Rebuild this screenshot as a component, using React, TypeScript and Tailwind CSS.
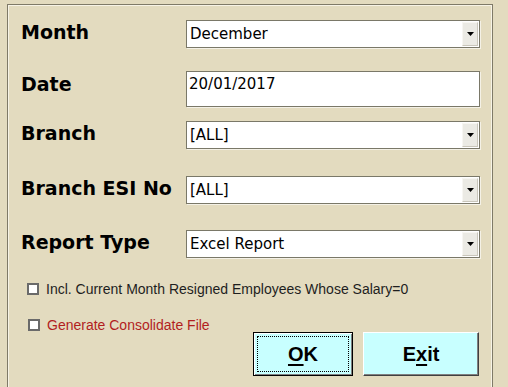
import type { ReactNode } from "react";

const labelFont = { fontFamily: '"DejaVu Sans", Verdana, sans-serif' };

const Arrow = () => (
    <svg width="7" height="4" viewBox="0 0 7 4">
        <polygon points="0,0 7,0 3.5,4" fill="#000" />
    </svg>
);

const Select = ({ value }: { value: string }) => (
    <div className="flex h-[28px] w-[294px] items-center border border-[#7a7868] bg-white shadow-[1px_1px_0_#f4f1e6]">
        <span className="flex-1 pl-[3px] text-[15px] leading-none text-black font-['DejaVu_Sans',sans-serif]">
            {value}
        </span>
        <div className="mr-[1px] flex h-[24px] w-[16px] items-center justify-center border border-t-[#f7f6f2] border-l-[#f7f6f2] border-b-[#c9c6bb] border-r-[#c9c6bb] bg-[#ebeae4]">
            <Arrow />
        </div>
    </div>
);

const Row = ({
    label,
    mt,
    pb,
    children,
}: {
    label: string;
    mt: string;
    pb: string;
    children: ReactNode;
}) => (
    <div className={`flex items-center ${mt}`}>
        <div
            className={`w-[165px] text-[19px] font-bold leading-none text-black ${pb}`}
            style={labelFont}
        >
            {label}
        </div>
        {children}
    </div>
);

const Check = ({ text, red }: { text: string; red?: boolean }) => (
    <div className="flex h-[12px] items-center gap-[7px]">
        <div className="h-[12px] w-[12px] border-2 border-[#6a6a6a] bg-white" />
        <span
            className={`text-[14px] leading-none font-['Liberation_Sans',Arial,sans-serif] ${
                red ? "text-[#b21e1e]" : "text-[#1e1e1e]"
            }`}
        >
            {text}
        </span>
    </div>
);

export default function App() {
    return (
        <div className="h-[387px] w-[508px] overflow-hidden bg-[#e3dbbf] pt-[4px] pl-[7px]">
            <div className="h-[420px] w-[486px] border border-[#7f7a68] bg-[#e3dbbf] pl-[13px] shadow-[inset_1px_1px_0_#f7f3e6,inset_-1px_0_0_#f7f3e6]">
                <Row label="Month" mt="mt-[15px]" pb="pb-[4px]">
                    <Select value="December" />
                </Row>
                <Row label="Date" mt="mt-[23px]" pb="pb-[9px]">
                    <div className="h-[36px] w-[294px] border border-[#7a7868] bg-white pt-[5px] pl-[2px] text-[15px] leading-none text-black shadow-[1px_1px_0_#f4f1e6] font-['DejaVu_Sans',sans-serif]">
                        20/01/2017
                    </div>
                </Row>
                <Row label="Branch" mt="mt-[14px]" pb="pb-[4px]">
                    <Select value="[ALL]" />
                </Row>
                <Row label="Branch ESI No" mt="mt-[27px]" pb="pb-[3px]">
                    <Select value="[ALL]" />
                </Row>
                <Row label="Report Type" mt="mt-[26px]" pb="pb-[4px]">
                    <Select value="Excel Report" />
                </Row>

                <div className="mt-[25px] pl-[6px]">
                    <Check text="Incl. Current Month Resigned Employees Whose Salary=0" />
                </div>
                <div className="mt-[24px] pl-[7px]">
                    <Check text="Generate Consolidate File" red />
                </div>

                <div className="mt-[1px] flex gap-[10px] pl-[232px] font-['Liberation_Sans',Arial,sans-serif]">
                    <button className="flex h-[44px] w-[100px] items-center justify-center border border-black bg-[#c8ffff] p-[3px] shadow-[inset_1px_1px_0_#ffffff,inset_-1px_-1px_0_#808080]">
                        <span className="flex h-full w-full items-center justify-center border border-dotted border-black text-[20px] font-bold text-black">
                            <span className="underline decoration-2 underline-offset-[3px]">O</span>K
                        </span>
                    </button>
                    <button className="flex h-[44px] w-[116px] items-center justify-center border border-t-white border-l-white border-b-[#404040] border-r-[#404040] bg-[#c8ffff] text-[20px] font-bold text-black shadow-[inset_-1px_-1px_0_#808080]">
                        E<span className="underline decoration-2 underline-offset-[3px]">x</span>it
                    </button>
                </div>
            </div>
        </div>
    );
}
